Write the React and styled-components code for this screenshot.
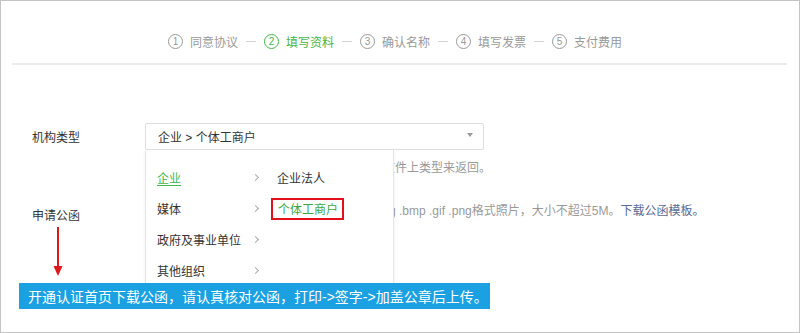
import React from "react";
import styled, { createGlobalStyle } from "styled-components";

const GlobalStyle = createGlobalStyle`
  html, body {
    margin: 0;
    padding: 0;
    background: #fff;
  }
  body {
    font-family: "Liberation Sans", "Noto Sans CJK SC", sans-serif;
    font-size: 12px;
    color: #333;
  }
`;

const Page = styled.div`
  position: relative;
  box-sizing: border-box;
  width: 800px;
  height: 333px;
  border: 1px solid #c4c4c4;
  overflow: hidden;
  background: #fff;
`;

const Steps = styled.div`
  display: flex;
  align-items: center;
  justify-content: center;
  box-sizing: border-box;
  height: 64px;
  margin: 0 12px 0 11px;
  padding: 19px 9px 0 0;
  border-bottom: 2px solid #ececec;
`;

const Step = styled.div`
  display: flex;
  align-items: center;
  gap: 7px;
  color: ${(p) => (p.$active ? "#44b549" : "#999")};
  font-size: 12px;
`;

const Circle = styled.span`
  display: inline-flex;
  align-items: center;
  justify-content: center;
  box-sizing: border-box;
  width: 15px;
  height: 15px;
  border: 1px solid currentColor;
  border-radius: 50%;
  font-family: "Liberation Sans", sans-serif;
  font-size: 10px;
  line-height: 1;
`;

const Dash = styled.span`
  display: inline-block;
  width: 10px;
  height: 1px;
  margin: 0 8px;
  background: #d4d4d4;
`;

const Form = styled.div`
  padding: 58px 0 0 31px;
`;

const Row = styled.div`
  display: flex;
  align-items: center;
  min-height: ${(p) => p.$h || 27}px;
  margin-top: ${(p) => p.$mt || 0}px;
`;

const Label = styled.div`
  width: 113px;
  flex-shrink: 0;
  color: #333;
  font-size: 12px;
  padding-top: ${(p) => p.$pt || 0}px;
`;

const Field = styled.div`
  position: relative;
`;

const Select = styled.div`
  display: flex;
  align-items: center;
  justify-content: space-between;
  box-sizing: border-box;
  width: 339px;
  height: 27px;
  padding: 0 10px 0 12px;
  border: 1px solid #dedede;
  border-radius: 2px;
  color: #333;
`;

const Caret = styled.span`
  width: 0;
  height: 0;
  margin-top: -3px;
  border-left: 3px solid transparent;
  border-right: 3px solid transparent;
  border-top: 4px solid #999;
`;

const Hint = styled.div`
  margin-left: 113px;
  padding-left: 2px;
  margin-top: ${(p) => p.$mt || 0}px;
  line-height: 18px;
  color: #999;
  white-space: nowrap;
`;

const HintInline = styled.div`
  line-height: 18px;
  color: #999;
  white-space: nowrap;
  margin-top: -2px;
`;

const Link = styled.a`
  color: #576b95;
  text-decoration: none;
`;

const Dropdown = styled.div`
  position: absolute;
  left: 0;
  top: 27px;
  z-index: 2;
  display: flex;
  box-sizing: border-box;
  width: 249px;
  height: 145px;
  padding-top: 12px;
  background: #fff;
  border: 1px solid #e6e6e6;
  border-top: none;
  box-shadow: 0 2px 4px rgba(0, 0, 0, 0.06);
`;

const Column = styled.ul`
  list-style: none;
  margin: 0;
  padding: 0;
  width: ${(p) => p.$w}px;
`;

const Item = styled.li`
  display: flex;
  align-items: center;
  justify-content: space-between;
  height: 31px;
  padding: 0 ${(p) => (p.$sub ? 0 : 6)}px 0 11px;
  color: ${(p) => (p.$active ? "#44b549" : "#333")};
  text-decoration: ${(p) => (p.$underline ? "underline" : "none")};
  text-underline-offset: 2px;
`;

const Chevron = styled.span`
  width: 4px;
  height: 4px;
  margin-right: 2px;
  border-right: 1px solid #aaa;
  border-top: 1px solid #aaa;
  transform: rotate(45deg);
`;

const Marked = styled.span`
  display: inline-flex;
  align-items: center;
  height: 22px;
  margin-left: -6px;
  padding: 0 4px 0 5px;
  box-sizing: border-box;
  border: 2px solid #e3101c;
  color: #3aa83f;
`;

const Arrow = styled.svg`
  position: absolute;
  left: 51px;
  top: 226px;
`;

const Banner = styled.div`
  position: absolute;
  left: 18px;
  top: 282px;
  z-index: 3;
  box-sizing: border-box;
  width: 471px;
  height: 26px;
  padding-left: 9px;
  display: flex;
  align-items: center;
  background: #1ba1e2;
  color: #fff;
  font-size: 14px;
  white-space: nowrap;
`;

const steps = ["同意协议", "填写资料", "确认名称", "填写发票", "支付费用"];
const parents = ["企业", "媒体", "政府及事业单位", "其他组织"];

export default function App() {
  return (
    <>
      <GlobalStyle />
      <Page>
        <Steps>
          {steps.map((s, i) => (
            <React.Fragment key={s}>
              {i > 0 && <Dash />}
              <Step $active={i === 1}>
                <Circle>{i + 1}</Circle>
                {s}
              </Step>
            </React.Fragment>
          ))}
        </Steps>

        <Form>
          <Row>
            <Label>机构类型</Label>
            <Field>
              <Select>
                <span>企业 &gt; 个体工商户</span>
                <Caret />
              </Select>
              <Dropdown>
                <Column $w={120}>
                  {parents.map((p, i) => (
                    <Item key={p} $active={i === 0} $underline={i === 0}>
                      {p}
                      <Chevron />
                    </Item>
                  ))}
                </Column>
                <Column $w={127}>
                  <Item $sub>企业法人</Item>
                  <Item $sub>
                    <Marked>个体工商户</Marked>
                  </Item>
                </Column>
              </Dropdown>
            </Field>
          </Row>
          <Hint $mt={9}>* 请按照营业执照或其他登记证书等有效证明文件上类型来返回。</Hint>

          <Row $h={22} $mt={23}>
            <Label $pt={6}>申请公函</Label>
            <HintInline>
              请上传加盖公章并签字的公函扫描件，支持 .jpg .bmp .gif .png格式照片，大小不超过5M。
              <Link href="#">下载公函模板。</Link>
            </HintInline>
          </Row>
        </Form>

        <Arrow width="12" height="50" viewBox="0 0 12 50">
          <line x1="6" y1="0" x2="6" y2="41" stroke="#e0161d" strokeWidth="2" />
          <path d="M1.5 39 L10.5 39 L6 49 Z" fill="#e0161d" />
        </Arrow>

        <Banner>开通认证首页下载公函，请认真核对公函，打印-&gt;签字-&gt;加盖公章后上传。</Banner>
      </Page>
    </>
  );
}
